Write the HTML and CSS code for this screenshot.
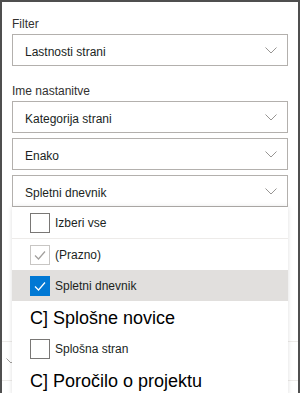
FILE: index.html
```html
<!DOCTYPE html>
<html lang="sl">
<head>
  <meta charset="UTF-8" />
  <title>Filter</title>
  <link rel="stylesheet" href="styles.css">
</head>
<body>

<div class="pane">
  <label class="lbl">Filter</label>
  <div class="select">
    <span class="select-text">Lastnosti strani</span>
    <svg class="chev" width="12" height="7" viewBox="0 0 12 7"><path d="M0.5 0.5 L6 6 L11.5 0.5" /></svg>
  </div>

  <label class="lbl lbl-gap">Ime nastanitve</label>
  <div class="select">
    <span class="select-text">Kategorija strani</span>
    <svg class="chev" width="12" height="7" viewBox="0 0 12 7"><path d="M0.5 0.5 L6 6 L11.5 0.5" /></svg>
  </div>
  <div class="select">
    <span class="select-text">Enako</span>
    <svg class="chev" width="12" height="7" viewBox="0 0 12 7"><path d="M0.5 0.5 L6 6 L11.5 0.5" /></svg>
  </div>

  <div class="select-wrap">
    <div class="select">
      <span class="select-text">Spletni dnevnik</span>
      <svg class="chev" width="12" height="7" viewBox="0 0 12 7"><path d="M0.5 0.5 L6 6 L11.5 0.5" /></svg>
    </div>

    <!-- open dropdown list -->
    <div class="menu">
      <div class="opt opt-first">
        <span class="box"></span>
        <span>Izberi vse</span>
      </div>
      <div class="opt">
        <span class="box box-off">
          <svg width="18" height="18" viewBox="0 0 18 18"><path d="M4 9.5 L7.5 13 L14 5.5" /></svg>
        </span>
        <span>(Prazno)</span>
      </div>
      <div class="opt opt-sel">
        <span class="box box-on">
          <svg width="18" height="18" viewBox="0 0 18 18"><path d="M4 9.5 L7.5 13 L14 5.5" /></svg>
        </span>
        <span>Spletni dnevnik</span>
      </div>
      <div class="grp">C] Splošne novice</div>
      <div class="opt">
        <span class="box"></span>
        <span>Splošna stran</span>
      </div>
      <div class="grp">C] Poročilo o projektu</div>
    </div>
  </div>

  <!-- rows behind the open list -->
  <div class="rest">
    <div class="rest-row">
      <svg class="rest-chev" width="10" height="6" viewBox="0 0 10 6"><path d="M0.5 0.5 L5 5 L9.5 0.5" /></svg>
    </div>
    <div class="rest-row"></div>
  </div>
</div>

</body>
</html>
```

FILE: styles.css
```css
body {
  margin: 0;
  overflow: hidden;
  font-family: "Liberation Sans", Arial, sans-serif;
  background: #fff;
}
.pane {
  box-sizing: border-box;
  width: 300px;
  height: 393px;
  overflow: hidden;
  border: 2px solid #4f4f4f;
  border-bottom: none;
  padding: 14px 10px 0;
}
.lbl {
  display: block;
  font-size: 12px;
  line-height: 16px;
  color: #323130;
  margin-bottom: 2px;
}
.lbl-gap {
  margin-top: 17px;
}
.select {
  box-sizing: border-box;
  height: 32px;
  border: 1px solid #b3b0ad;
  display: flex;
  align-items: center;
  justify-content: space-between;
  padding: 0 10px 0 12px;
  font-size: 12px;
  color: #201f1e;
  background: #fff;
}
.select + .select,
.select + .select-wrap {
  margin-top: 5px;
}
.select-text {
  padding-top: 4px;
}
.chev path {
  fill: none;
  stroke: #979593;
  stroke-width: 1;
}
.select-wrap {
  position: relative;
  margin-top: 5px;
}
.menu {
  position: absolute;
  top: 100%;
  left: 0;
  right: 0;
  z-index: 2;
  background: #fff;
  box-shadow: 0 0 5px rgba(0, 0, 0, 0.13);
}
.opt {
  box-sizing: border-box;
  height: 31px;
  display: flex;
  align-items: center;
  gap: 5px;
  padding-left: 18px;
  font-size: 12px;
  color: #201f1e;
}
.opt-first {
  height: 32px;
  border-bottom: 1px solid #edebe9;
}
.opt-sel {
  background: #e1dfdd;
}
.box {
  box-sizing: border-box;
  width: 20px;
  height: 20px;
  border: 1px solid #797775;
  display: flex;
  align-items: center;
  justify-content: center;
  background: #fff;
}
.box path {
  fill: none;
  stroke-width: 1.2;
}
.box-off {
  border-color: #c8c6c4;
}
.box-off path {
  stroke: #a19f9d;
}
.box-on {
  background: #0078d4;
  border-color: #0078d4;
}
.box-on path {
  stroke: #fff;
}
.grp {
  box-sizing: border-box;
  height: 32px;
  display: flex;
  align-items: center;
  padding: 3px 0 0 18px;
  font-size: 18px;
  color: #000;
}
.rest {
  margin: 134px -10px 0;
}
.rest-row {
  height: 38px;
  border-top: 1px solid #edebe9;
  display: flex;
  align-items: center;
  padding-left: 4px;
}
.rest-chev path {
  fill: none;
  stroke: #a19f9d;
  stroke-width: 1;
}
```
